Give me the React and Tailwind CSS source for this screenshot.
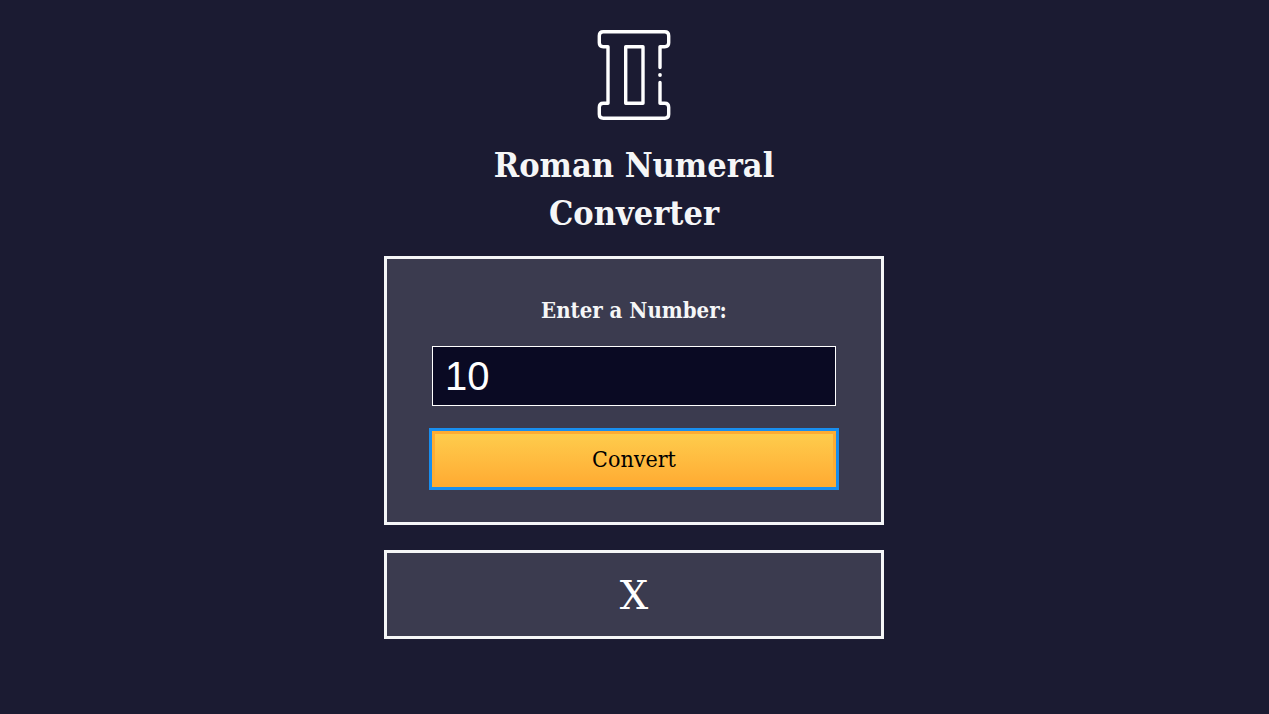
import { useState } from "react";

const NUMERALS = [
  ["M", 1000], ["CM", 900], ["D", 500], ["CD", 400], ["C", 100], ["XC", 90],
  ["L", 50], ["XL", 40], ["X", 10], ["IX", 9], ["V", 5], ["IV", 4], ["I", 1],
];

function toRoman(value) {
  let rest = value;
  let result = "";
  for (const [symbol, amount] of NUMERALS) {
    while (rest >= amount) {
      result += symbol;
      rest -= amount;
    }
  }
  return result;
}

function PillarIcon() {
  return (
    <svg
      className="size-[90px]"
      viewBox="0 0 90 90"
      fill="none"
      stroke="white"
      strokeWidth="3.4"
      strokeLinecap="round"
      strokeLinejoin="round"
      aria-hidden="true"
    >
      <path d="M71 37.5V16.7H75.7Q79.7 16.7 79.7 12.7V5.7Q79.7 1.7 75.7 1.7H14.3Q10.3 1.7 10.3 5.7V12.7Q10.3 16.7 14.3 16.7H19V73.3H14.3Q10.3 73.3 10.3 77.3V84.3Q10.3 88.3 14.3 88.3H75.7Q79.7 88.3 79.7 84.3V77.3Q79.7 73.3 75.7 73.3H71V52.5" />
      <path d="M36.7 16.7H54V73.3H36.7Z" />
      <circle cx="71" cy="45" r="1.9" fill="white" stroke="none" />
    </svg>
  );
}

export default function App() {
  const [number, setNumber] = useState("10");
  const [output, setOutput] = useState("X");

  const convert = (event) => {
    event.preventDefault();
    const value = parseInt(number, 10);
    if (Number.isNaN(value)) setOutput("Please enter a valid number");
    else if (value < 1) setOutput("Please enter a number greater than or equal to 1");
    else if (value > 3999) setOutput("Please enter a number less than or equal to 3999");
    else setOutput(toRoman(value));
  };

  return (
    <main className="flex min-h-screen flex-col items-center bg-[#1b1b32] pt-[30px] pr-[17px] pb-8 pl-4 font-['Roboto_Slab','DejaVu_Serif_Condensed','DejaVu_Serif',serif] text-[#f5f6f7]">
      <PillarIcon />
      <h1 className="mt-[21px] max-w-[360px] text-center text-[34px] leading-12 font-bold">
        Roman Numeral Converter
      </h1>
      <form
        onSubmit={convert}
        className="mt-[19px] flex w-full max-w-[500px] flex-col border-3 border-[#f5f6f7] bg-[#3b3b4f] px-[45px] py-[35px]"
      >
        <label htmlFor="number" className="text-center text-[22px] leading-8 font-bold">
          Enter a Number:
        </label>
        <input
          id="number"
          type="text"
          inputMode="numeric"
          value={number}
          onChange={(event) => setNumber(event.target.value)}
          className="mt-5 h-[60px] w-full border border-white bg-[#0a0a23] px-3 font-['Liberation_Sans',sans-serif] text-[40px] text-white outline-none"
        />
        <button
          type="submit"
          className="mt-[25px] h-14 w-full border-3 border-[#feac32] bg-linear-to-b from-[#fecc4c] to-[#ffac33] text-[23px] text-black outline-3 outline-[#198eee]"
        >
          Convert
        </button>
      </form>
      <output
        htmlFor="number"
        className="mt-[25px] flex min-h-[89px] w-full max-w-[500px] items-center justify-center border-3 border-[#f5f6f7] bg-[#3b3b4f] px-4 text-center font-['Roboto_Slab','DejaVu_Serif',serif] text-[40px] leading-12 text-white"
      >
        {output}
      </output>
    </main>
  );
}
